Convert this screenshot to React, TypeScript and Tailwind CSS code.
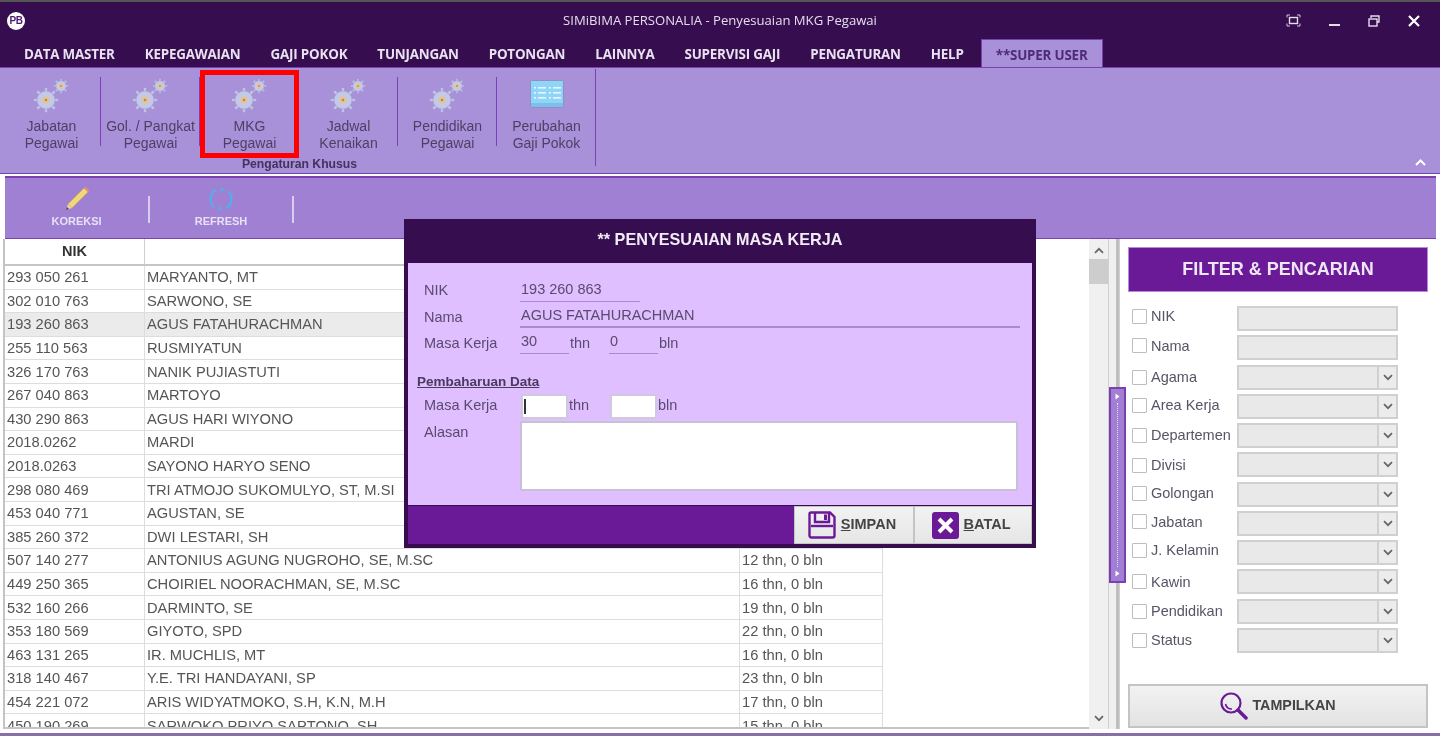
import React from "react";

const tabs = ["DATA MASTER", "KEPEGAWAIAN", "GAJI POKOK", "TUNJANGAN", "POTONGAN", "LAINNYA", "SUPERVISI GAJI", "PENGATURAN", "HELP"];

const rows: [string, string, string][] = [
  ["293 050 261", "MARYANTO, MT", ""],
  ["302 010 763", "SARWONO, SE", ""],
  ["193 260 863", "AGUS FATAHURACHMAN", ""],
  ["255 110 563", "RUSMIYATUN", ""],
  ["326 170 763", "NANIK PUJIASTUTI", ""],
  ["267 040 863", "MARTOYO", ""],
  ["430 290 863", "AGUS HARI WIYONO", ""],
  ["2018.0262", "MARDI", ""],
  ["2018.0263", "SAYONO HARYO SENO", ""],
  ["298 080 469", "TRI ATMOJO SUKOMULYO, ST, M.SI", ""],
  ["453 040 771", "AGUSTAN, SE", ""],
  ["385 260 372", "DWI LESTARI, SH", ""],
  ["507 140 277", "ANTONIUS AGUNG NUGROHO, SE, M.SC", "12 thn, 0 bln"],
  ["449 250 365", "CHOIRIEL NOORACHMAN, SE, M.SC", "16 thn, 0 bln"],
  ["532 160 266", "DARMINTO, SE", "19 thn, 0 bln"],
  ["353 180 569", "GIYOTO, SPD", "22 thn, 0 bln"],
  ["463 131 265", "IR. MUCHLIS, MT", "16 thn, 0 bln"],
  ["318 140 467", "Y.E. TRI HANDAYANI, SP", "23 thn, 0 bln"],
  ["454 221 072", "ARIS WIDYATMOKO, S.H, K.N, M.H", "17 thn, 0 bln"],
  ["450 190 269", "SARWOKO PRIYO SAPTONO, SH", "15 thn, 0 bln"],
];

const filters: [string, boolean, string][] = [
  ["NIK", false, "mb-[4px]"],
  ["Nama", false, "mb-[4px]"],
  ["Agama", true, ""],
  ["Area Kerja", true, "mb-[2px]"],
  ["Departemen", true, ""],
  ["Divisi", true, "mt-[1px]"],
  ["Golongan", true, "mb-[2px]"],
  ["Jabatan", true, "mb-[3px]"],
  ["J. Kelamin", true, "mb-[4px]"],
  ["Kawin", true, ""],
  ["Pendidikan", true, ""],
  ["Status", true, ""],
];

function Gears() {
  const teeth = (cx: number, cy: number, r: number, n: number, w: number) =>
    Array.from({ length: n }, (_, i) => (
      <rect
        key={i}
        x={cx - w / 2}
        y={cy - r}
        width={w}
        height={r * 2}
        transform={`rotate(${(i * 180) / n} ${cx} ${cy})`}
        fill="#bfc4e6"
        stroke="#9488c2"
        strokeWidth="0.4"
      />
    ));
  return (
    <svg width="38" height="36" viewBox="0 0 38 36">
      {teeth(13, 22, 12.5, 4, 3)}
      <circle cx="13" cy="22" r="9" fill="#c4c9e8" stroke="#a89dd0" strokeWidth="0.6" />
      <circle cx="13" cy="22" r="3.4" fill="#e9c48e" />
      <circle cx="13" cy="22" r="1.3" fill="#b98a55" />
      {teeth(28, 8, 7.5, 4, 2)}
      <circle cx="28" cy="8" r="5.2" fill="#c4c9e8" stroke="#a89dd0" strokeWidth="0.5" />
      <circle cx="28" cy="8" r="2.4" fill="#e9c48e" />
      <circle cx="28" cy="8" r="0.9" fill="#b98a55" />
    </svg>
  );
}

function ListIcon() {
  const lines = [8, 13, 18];
  return (
    <svg width="34" height="28" viewBox="0 0 34 28" className="-mt-[3px]">
      <rect x="0.5" y="0.5" width="33" height="27" rx="1" fill="#90d4f8" stroke="#8f8fc4" />
      <rect x="1" y="23" width="32" height="4" fill="#7cc0ea" />
      {lines.map((y) => (
        <g key={y} fill="#e6f6ff">
          <rect x="4" y={y - 1} width="2" height="1.6" />
          <rect x="8" y={y - 1} width="8" height="1.6" />
          <rect x="19" y={y - 1} width="2" height="1.6" />
          <rect x="23" y={y - 1} width="8" height="1.6" />
        </g>
      ))}
    </svg>
  );
}

function RibbonItem({ a, b, icon, sep = true }: { a: string; b: string; icon: React.ReactNode; sep?: boolean }) {
  return (
    <div className="relative flex h-[93px] w-[99px] shrink-0 flex-col items-center pt-[9px]">
      <div className="flex h-[37px] items-center justify-center">{icon}</div>
      <div className="mt-[4px] text-center text-[14px] leading-[17px] whitespace-nowrap text-[#4e4064]">
        {a}
        <br />
        {b}
      </div>
      {sep && <div className="absolute right-0 top-[9px] h-[69px] w-[1px] bg-[#7f3fb8]" />}
    </div>
  );
}

function Chevron({ className = "" }: { className?: string }) {
  return (
    <svg width="10" height="7" viewBox="0 0 10 7" className={className}>
      <path d="M1 1.2 L5 5.2 L9 1.2" fill="none" stroke="#666" strokeWidth="1.7" />
    </svg>
  );
}

export default function App() {
  return (
    <div className="relative flex h-[736px] w-[1440px] flex-col overflow-hidden bg-[#f0f0f0] font-['Liberation_Sans',Arial,sans-serif] blur-[0.35px]">
      {/* window chrome */}
      <div className="h-[2px] shrink-0 bg-[#555555]" />
      <div className="flex h-[37px] shrink-0 items-center bg-[#360e50] pl-[7px] pr-[20px]">
        <div className="flex h-[18px] w-[18px] shrink-0 items-center justify-center rounded-full bg-white text-[10px] font-bold tracking-[-0.5px] text-[#4a1a70]">
          PB
        </div>
        <div className="flex-1 pl-[129px] text-center font-['Open_Sans',sans-serif] text-[13.1px] text-[#e6dcec]">
          SIMiBIMA PERSONALIA - Penyesuaian MKG Pegawai
        </div>
        <div className="flex w-[134px] shrink-0 items-center justify-between">
          <svg width="15" height="13" viewBox="0 0 15 13">
            <path d="M1 3.5V1H4M11 1H14V3.5M1 9.5V12H4M11 12H14V9.5" fill="none" stroke="#cfc3da" />
            <rect x="3.5" y="3.5" width="8" height="6" fill="none" stroke="#e6dcec" strokeWidth="1.4" />
          </svg>
          <svg width="11" height="13" viewBox="0 0 11 13">
            <rect x="0" y="10" width="11" height="2" fill="#e6dcec" />
          </svg>
          <svg width="12" height="12" viewBox="0 0 12 12">
            <path d="M3 3V1H11V7H9" fill="none" stroke="#e6dcec" strokeWidth="1.4" />
            <rect x="1" y="4" width="8" height="7" fill="none" stroke="#e6dcec" strokeWidth="1.4" />
          </svg>
          <svg width="12" height="12" viewBox="0 0 12 12">
            <path d="M1 1L11 11M11 1L1 11" stroke="#ffffff" strokeWidth="2.2" />
          </svg>
        </div>
      </div>
      {/* tabs */}
      <div className="flex h-[28px] shrink-0 items-stretch bg-[#360e50] pl-[9px]">
        {tabs.map((t) => (
          <div key={t} className="flex items-center px-[15px] pt-[3px] font-['Open_Sans',sans-serif] text-[13.4px] font-bold tracking-[-0.2px] whitespace-nowrap text-[#e9e1ef]">
            {t}
          </div>
        ))}
        <div className="ml-[2px] flex w-[122px] items-center justify-center border-x border-t border-[#7b3fb0] bg-[#a991da] pt-[3px] font-['Open_Sans',sans-serif] text-[13.4px] font-bold tracking-[-0.2px] whitespace-nowrap text-[#4e2b78]">
          **SUPER USER
        </div>
      </div>
      {/* ribbon */}
      <div className="relative h-[107px] shrink-0 border-y border-[#7b3fb0] bg-[#a991da]">
        <div className="flex w-[595px] pl-[2px]">
          <RibbonItem a="Jabatan" b="Pegawai" icon={<Gears />} />
          <RibbonItem a="Gol. / Pangkat" b="Pegawai" icon={<Gears />} />
          <RibbonItem a="MKG" b="Pegawai" icon={<Gears />} />
          <RibbonItem a="Jadwal" b="Kenaikan" icon={<Gears />} />
          <RibbonItem a="Pendidikan" b="Pegawai" icon={<Gears />} />
          <RibbonItem a="Perubahan" b="Gaji Pokok" icon={<ListIcon />} sep={false} />
        </div>
        <div className="mt-[-4px] w-[599px] text-center text-[12.2px] font-bold leading-[14px] text-[#43325c]">
          Pengaturan Khusus
        </div>
        <div className="absolute left-[595px] top-[1px] h-[97px] w-[1px] bg-[#7f3fb8]" />
        <svg width="11" height="7" viewBox="0 0 11 7" className="absolute right-[14px] top-[91px]">
          <path d="M1 6L5.5 1.5L10 6" fill="none" stroke="#ffffff" strokeWidth="2" />
        </svg>
      </div>
      {/* highlight */}
      <div className="absolute left-[200px] top-[70px] h-[88px] w-[99px] border-[5px] border-[#fe0000]" />

      {/* body */}
      <div className="flex flex-1 flex-col bg-white pl-[3px] pr-[4px] pt-[2px]">
        <div className="ml-[2px] flex h-[63px] shrink-0 items-start border-y border-t-[2px] border-[#7b3fb0] bg-[#9f80d2]">
          <div className="flex w-[143px] flex-col items-center pt-[8px]">
            <svg width="26" height="26" viewBox="0 0 26 26">
              <path d="M4 18 L20 2 L24 6 L8 22 Z" fill="#f0d878" stroke="#c4a24c" strokeWidth="0.6" />
              <path d="M20 2 L21.5 0.5 L25.5 4.5 L24 6 Z" fill="#e88a80" />
              <path d="M4 18 L8 22 L2 24 Z" fill="#e9d2b0" />
              <path d="M3 21 L5 23 L2 24 Z" fill="#44404c" />
            </svg>
            <span className="mt-[3px] text-[11px] font-bold leading-[13px] text-[#e9e0f6]">KOREKSI</span>
          </div>
          <div className="mt-[18px] h-[27px] w-[2px] bg-[#d8cdea]" />
          <div className="flex w-[142px] flex-col items-center pt-[8px]">
            <svg width="26" height="26" viewBox="0 0 26 26">
              <path d="M8 3.5 A 11 11 0 0 0 6 21" fill="none" stroke="#58abec" strokeWidth="2.4" />
              <path d="M18 22.5 A 11 11 0 0 0 20 5" fill="none" stroke="#58abec" strokeWidth="2.4" />
              <path d="M13 1 L17 3.5 L13 6 Z" fill="#58abec" />
              <path d="M13 25 L9 22.5 L13 20 Z" fill="#58abec" />
            </svg>
            <span className="mt-[3px] text-[11px] font-bold leading-[13px] text-[#e9e0f6]">REFRESH</span>
          </div>
          <div className="mt-[18px] h-[27px] w-[2px] bg-[#d8cdea]" />
        </div>

        <div className="flex min-h-0 flex-1">
          {/* table */}
          <div className="h-[490px] w-[1086px] shrink-0 overflow-hidden border-b-2 border-l-2 border-[#c4c4c4] bg-white text-[14.7px] text-[#555555]">
            <div className="flex h-[27px] w-[878px] border-b-2 border-[#c6c6c6] text-[14.5px] font-bold text-[#333333]">
              <div className="flex w-[140px] items-center justify-center border-r border-[#cfcfcf]">NIK</div>
              <div className="flex-1" />
            </div>
            {rows.map((r, i) => (
              <div
                key={r[0]}
                className={`flex h-[23.6px] w-[878px] items-center border-b border-[#dddddd] ${i === 2 ? "bg-[#ebebeb]" : ""}`}
              >
                <div className="flex h-full w-[140px] items-center border-r border-[#dddddd] pl-[2px] whitespace-nowrap">{r[0]}</div>
                <div className="flex h-full w-[595px] items-center border-r border-[#dddddd] pl-[2px] whitespace-nowrap">{r[1]}</div>
                <div className="flex h-full flex-1 items-center border-r border-[#dddddd] pl-[2px] whitespace-nowrap">{r[2]}</div>
              </div>
            ))}
          </div>
          {/* scrollbar */}
          <div className="flex h-[490px] w-[19px] shrink-0 flex-col items-center bg-[#f0f0f0]">
            <Chevron className="mt-[8px] rotate-180" />
            <div className="mt-[5px] h-[25px] w-full bg-[#cdcdcd]" />
            <Chevron className="mt-auto mb-[7px]" />
          </div>
          {/* splitter */}
          <div className="h-[490px] w-[12px] shrink-0 border-x border-[#d0d0d0] bg-[#f0f0f0] pl-[7px]">
            <div className="h-full w-[3px] bg-[#bfbfbf]" />
          </div>
          {/* filter */}
          <div className="flex h-[490px] w-[308px] shrink-0 flex-col bg-white pl-[8px] pt-[8px]">
            <div className="flex h-[45px] w-[300px] shrink-0 items-center justify-center border border-[#b58ad8] bg-[#6a1a96] text-[18px] font-bold text-[#eee6f4]">
              FILTER &amp; PENCARIAN
            </div>
            <div className="mt-[14px] flex shrink-0 flex-col">
              {filters.map(([label, drop, shift]) => (
                <div key={label} className="flex h-[29.27px] items-start">
                  <div className="flex h-[25px] w-[109px] items-center">
                    <div className={`ml-[4px] flex items-center ${shift}`}>
                      <div className="h-[15px] w-[15px] rounded-[1px] border border-[#bdbdbd] bg-white" />
                      <span className="ml-[4px] text-[14.5px] leading-none whitespace-nowrap text-[#555566]">{label}</span>
                    </div>
                  </div>
                  <div className="flex h-[25px] w-[161px] border-2 border-[#d0d0d0] bg-[#e9e9e9]">
                    <div className="flex-1" />
                    {drop && (
                      <div className="flex w-[19px] items-center justify-center border-l-2 border-[#d0d0d0] bg-[#ececec]">
                        <Chevron />
                      </div>
                    )}
                  </div>
                </div>
              ))}
            </div>
            <div className="mt-[27px] flex h-[44px] w-[300px] shrink-0 items-center justify-center gap-[4px] border-2 border-[#c4c4c4] bg-gradient-to-b from-[#f2f2f2] to-[#e3e3e3] text-[14.3px] font-bold text-[#444444]">
              <svg width="28" height="30" viewBox="0 0 28 30">
                <circle cx="11" cy="12" r="9.5" fill="none" stroke="#6a1a96" strokeWidth="2.2" />
                <path d="M5.5 13 A 6 6 0 0 0 12 18" fill="none" stroke="#6a1a96" strokeWidth="1.6" />
                <path d="M18 19 L26 27" stroke="#6a1a96" strokeWidth="3.5" strokeLinecap="round" />
              </svg>
              TAMPILKAN
            </div>
          </div>
        </div>
      </div>
      <div className="h-[3px] shrink-0 bg-[#8b6ea6]" />

      {/* splitter grip */}
      <div className="absolute left-[1109px] top-[387px] flex h-[196px] w-[17px] flex-col items-center border-2 border-[#7b3fb0] bg-[#a07fd4] py-[4px]">
        <svg width="5" height="7" viewBox="0 0 5 7" className="shrink-0"><path d="M0.5 0.5L4.5 3.5L0.5 6.5Z" fill="#fff" /></svg>
        <div className="my-[3px] w-0 flex-1 border-l border-dotted border-[#e6dcf6]" />
        <svg width="5" height="7" viewBox="0 0 5 7" className="shrink-0"><path d="M0.5 0.5L4.5 3.5L0.5 6.5Z" fill="#fff" /></svg>
      </div>

      {/* modal */}
      <div className="absolute left-[404px] top-[219px] flex h-[329px] w-[632px] flex-col border-[3px] border-b-[4px] border-[#360e50] bg-[#360e50]">
        <div className="flex h-[41px] shrink-0 items-center justify-center pb-[6px] text-[16.2px] font-bold text-[#f2ecf6]">
          ** PENYESUAIAN MASA KERJA
        </div>
        <div className="flex-1 border-x border-[#360e50] bg-[#dfbfff] pl-[16px] text-[14.5px] text-[#5a4a70]">
          <div className="mt-[13px] flex h-[26px] items-start">
            <div className="w-[96px] pt-[4px]">NIK</div>
            <div className="h-[26px] w-[120px] border-b border-[#a98ad0] pl-[1px] pt-[3px]">193 260 863</div>
          </div>
          <div className="flex h-[26px] items-start">
            <div className="w-[96px] pt-[5px]">Nama</div>
            <div className="h-[26px] w-[500px] border-b-2 border-[#a98ad0] pl-[1px] pt-[3px]">AGUS FATAHURACHMAN</div>
          </div>
          <div className="flex h-[26px] items-start">
            <div className="w-[96px] pt-[5px]">Masa Kerja</div>
            <div className="h-[26px] w-[49px] border-b border-[#a98ad0] pl-[1px] pt-[3px]">30</div>
            <div className="w-[40px] pl-[1px] pt-[5px]">thn</div>
            <div className="h-[26px] w-[49px] border-b border-[#a98ad0] pl-[1px] pt-[3px]">0</div>
            <div className="pl-[1px] pt-[5px]">bln</div>
          </div>
          <div className="mt-[20px] -ml-[7px] text-[13.5px] font-bold leading-[15px] text-[#4a3a60] underline">Pembaharuan Data</div>
          <div className="mt-[5px] flex h-[25px] items-center">
            <div className="w-[97px] pb-[1px]">Masa Kerja</div>
            <div className="flex h-[25px] w-[47px] items-center border-2 border-[#d0c8dc] bg-white pl-[1px]">
              <div className="h-[15px] w-[2px] bg-[#333333]" />
            </div>
            <div className="w-[42px] pb-[1px] pl-[1px]">thn</div>
            <div className="h-[25px] w-[47px] border-2 border-[#d0c8dc] bg-white" />
            <div className="pb-[1px] pl-[1px]">bln</div>
          </div>
          <div className="mt-[2px] flex items-start">
            <div className="w-[96px] pt-[1px]">Alasan</div>
            <div className="h-[70px] w-[498px] border-2 border-[#c8c0d4] bg-white" />
          </div>
        </div>
        <div className="flex h-[39px] shrink-0 items-stretch justify-end border-x border-t border-[#360e50] bg-[#6a1a96]">
          <div className="flex w-[120px] items-center justify-center gap-[5px] border border-[#c4c4c4] bg-gradient-to-b from-[#f2f2f2] to-[#e6e6e6] pr-[4px] text-[14.5px] font-bold text-[#444444]">
            <svg width="28" height="28" viewBox="0 0 28 28">
              <path d="M3 1.5H22L26.5 6V24.5Q26.5 26.5 24.5 26.5H3.5Q1.5 26.5 1.5 24.5V3Q1.5 1.5 3 1.5Z" fill="none" stroke="#6a1a96" strokeWidth="2.4" />
              <path d="M7 2V11H21V2" fill="none" stroke="#6a1a96" strokeWidth="2.4" />
              <rect x="16" y="3.5" width="3" height="5.5" fill="#6a1a96" />
              <path d="M3 15H25" stroke="#6a1a96" strokeWidth="2.4" />
            </svg>
            <span><span className="underline">S</span>IMPAN</span>
          </div>
          <div className="flex w-[118px] items-center justify-center gap-[5px] border border-[#c4c4c4] bg-gradient-to-b from-[#f2f2f2] to-[#e6e6e6] pr-[4px] text-[14.5px] font-bold text-[#444444]">
            <svg width="27" height="27" viewBox="0 0 27 27">
              <rect width="27" height="27" rx="3" fill="#6a1a96" />
              <path d="M7 7L20 20M20 7L7 20" stroke="#ffffff" strokeWidth="4" />
            </svg>
            <span><span className="underline">B</span>ATAL</span>
          </div>
        </div>
      </div>
    </div>
  );
}
